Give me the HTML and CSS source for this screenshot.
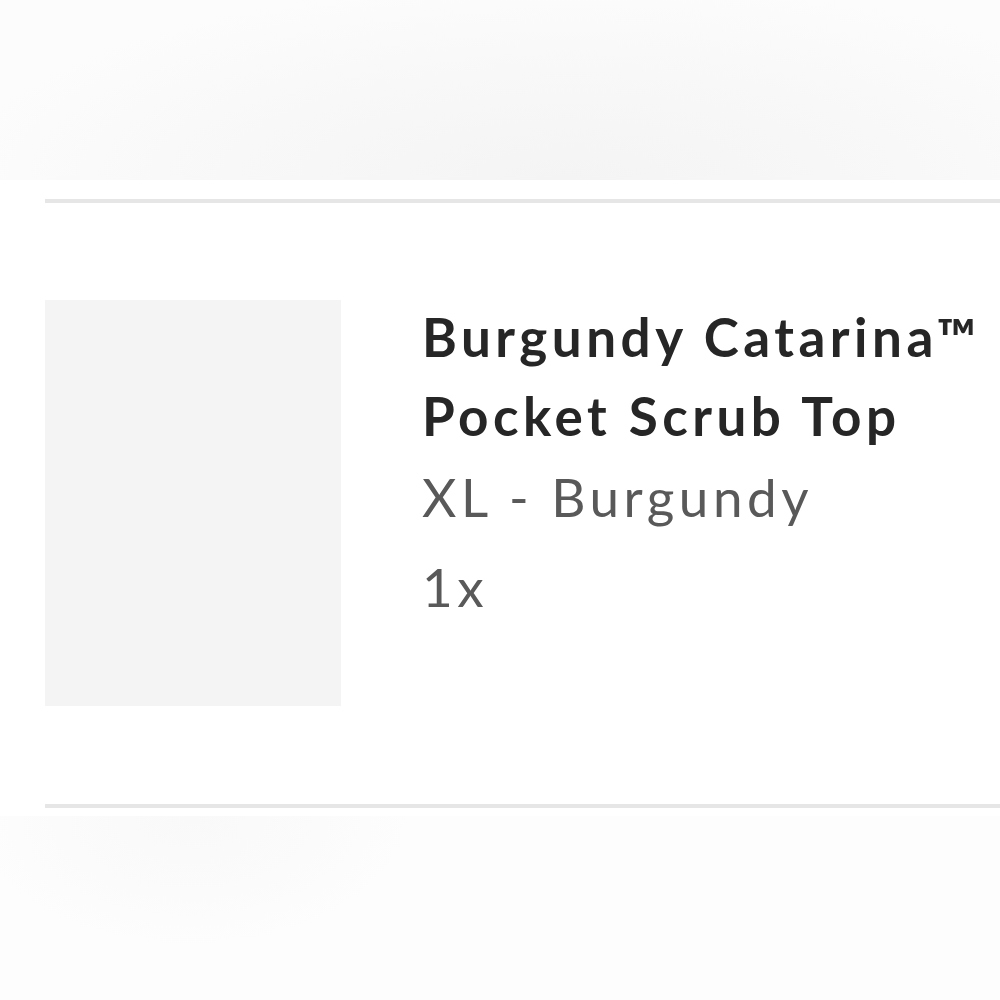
FILE: index.html
```html
<!DOCTYPE html>
<html lang="en">
<head>
<meta charset="utf-8">
<title>Cart item</title>
<link rel="stylesheet" href="styles.css">
</head>
<body>
<div class="top-fade"></div>
<div class="item">
  <div class="thumb"></div>
  <div class="info">
    <div class="title">Burgundy Catarina™ Pocket Scrub Top</div>
    <div class="variant">XL - Burgundy</div>
    <div class="qty">1x</div>
  </div>
</div>
<div class="bottom-fade"></div>
</body>
</html>
```
FILE: styles.css
```css
html, body {
  margin: 0;
  padding: 0;
  background: #ffffff;
}
body {
  width: 1000px;
  height: 1000px;
  overflow: hidden;
  font-family: Lato, "Open Sans", sans-serif;
}
.top-fade {
  height: 180px;
  background: radial-gradient(ellipse 620px 200px at 57% 100%, #f4f4f4 0%, #f8f8f8 55%, #fcfcfc 100%);
  background-color: #fdfdfd;
}
.item {
  margin-top: 19px;
  margin-left: 45px;
  border-top: 4px solid #e6e6e6;
  border-bottom: 4px solid #e6e6e6;
  padding: 97px 0 98px 0;
  display: flex;
  align-items: flex-start;
  gap: 81px;
}
.thumb {
  width: 296px;
  height: 406px;
  background: #f4f4f4;
  flex: none;
}
.info {
  margin-top: -3px;
  flex: 1;
  min-width: 0;
}
.title {
  font-weight: 700;
  font-size: 53px;
  line-height: 79px;
  color: #262626;
  letter-spacing: 4.5px;
}
.variant {
  font-size: 53px;
  line-height: 79px;
  margin-top: 2px;
  color: #595959;
  letter-spacing: 4.5px;
}
.qty {
  font-size: 53px;
  line-height: 79px;
  margin-top: 11px;
  color: #595959;
  letter-spacing: 4.5px;
}
.bottom-fade {
  margin-top: 8px;
  height: 200px;
  background: radial-gradient(ellipse 220px 130px at 19% 0%, #f9f9f9 0%, #fbfbfb 60%, #fdfdfd 100%);
}
```
